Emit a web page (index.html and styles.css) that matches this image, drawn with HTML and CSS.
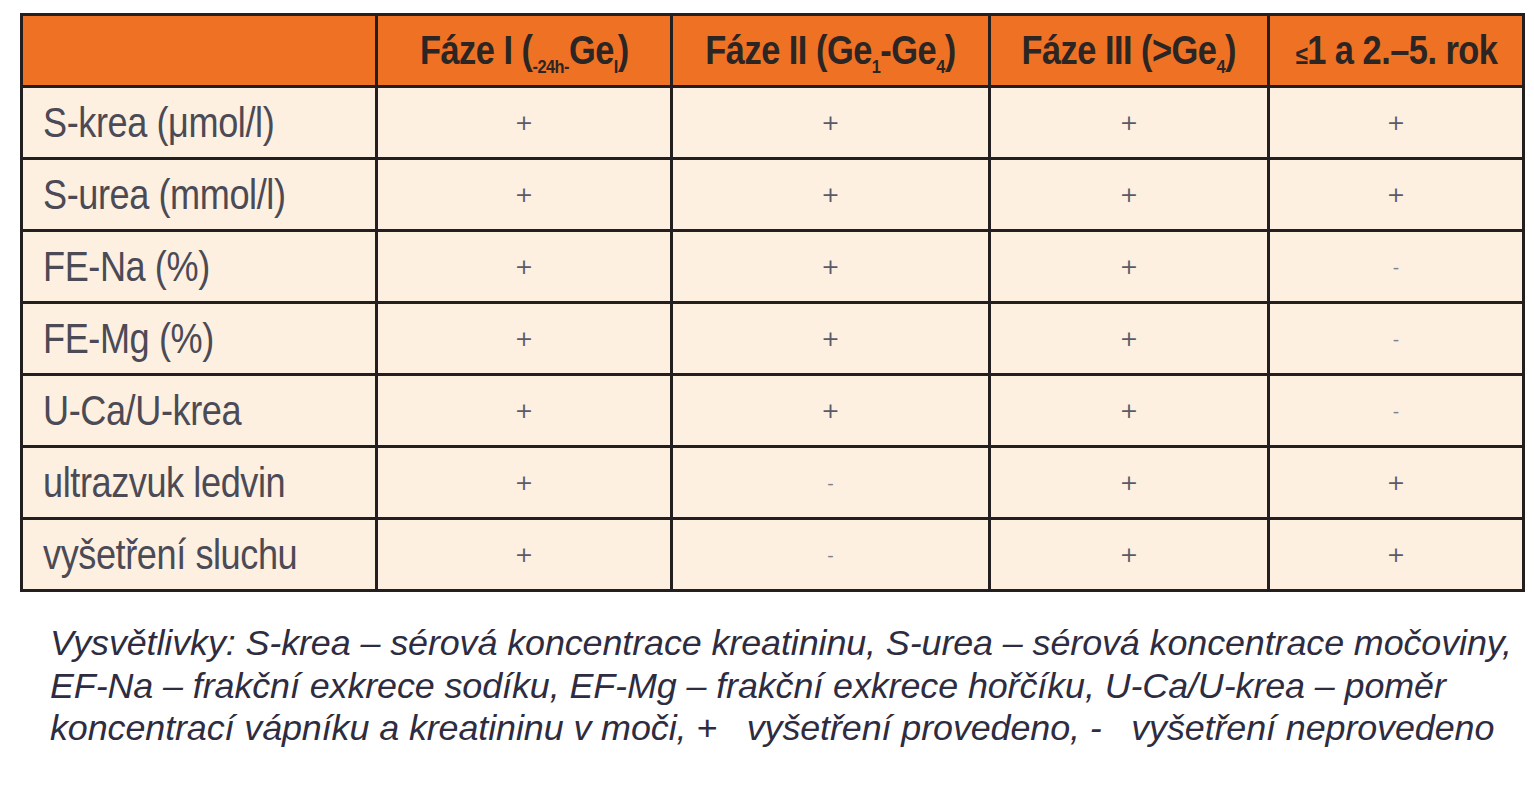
FILE: index.html
```html
<!DOCTYPE html>
<html lang="cs">
<head>
<meta charset="utf-8">
<title>Tabulka</title>
<link rel="stylesheet" href="styles.css">
</head>
<body>
<div class="page">
  <table class="grid">
    <colgroup>
      <col class="c0"><col class="c1"><col class="c2"><col class="c3"><col class="c4">
    </colgroup>
    <thead>
      <tr>
        <th></th>
        <th><span class="h">Fáze I (<sub>-24h-</sub>Ge<sub>I</sub>)</span></th>
        <th><span class="h">Fáze II (Ge<sub>1</sub>-Ge<sub>4</sub>)</span></th>
        <th><span class="h">Fáze III (&gt;Ge<sub>4</sub>)</span></th>
        <th><span class="h"><span class="le">≤</span>1 a 2.–5. rok</span></th>
      </tr>
    </thead>
    <tbody>
      <tr><td class="lab"><span class="t">S-krea (μmol/l)</span></td><td class="p">+</td><td class="p">+</td><td class="p">+</td><td class="p">+</td></tr>
      <tr><td class="lab"><span class="t">S-urea (mmol/l)</span></td><td class="p">+</td><td class="p">+</td><td class="p">+</td><td class="p">+</td></tr>
      <tr><td class="lab"><span class="t">FE-Na (%)</span></td><td class="p">+</td><td class="p">+</td><td class="p">+</td><td class="m">-</td></tr>
      <tr><td class="lab"><span class="t">FE-Mg (%)</span></td><td class="p">+</td><td class="p">+</td><td class="p">+</td><td class="m">-</td></tr>
      <tr><td class="lab"><span class="t">U-Ca/U-krea</span></td><td class="p">+</td><td class="p">+</td><td class="p">+</td><td class="m">-</td></tr>
      <tr><td class="lab"><span class="t">ultrazvuk ledvin</span></td><td class="p">+</td><td class="m">-</td><td class="p">+</td><td class="p">+</td></tr>
      <tr><td class="lab"><span class="t">vyšetření sluchu</span></td><td class="p">+</td><td class="m">-</td><td class="p">+</td><td class="p">+</td></tr>
    </tbody>
  </table>
  <p class="note">Vysvětlivky: S-krea – sérová koncentrace kreatininu, S-urea – sérová koncentrace močoviny,<br>EF-Na – frakční exkrece sodíku, EF-Mg – frakční exkrece hořčíku, U-Ca/U-krea – poměr<br>koncentrací vápníku a kreatininu v moči, +&nbsp;&nbsp;&nbsp;vyšetření provedeno, -&nbsp;&nbsp;&nbsp;vyšetření neprovedeno</p>
</div>
</body>
</html>
```
FILE: styles.css
```css
html, body {
  margin: 0;
  padding: 0;
  background: #ffffff;
}
.page {
  padding: 13px 0 0 20px;
  font-family: "Liberation Sans", "DejaVu Sans", sans-serif;
}
.grid {
  border-collapse: collapse;
  width: 1502px;
  table-layout: fixed;
}
.c0 { width: 355px; }
.c1 { width: 295px; }
.c2 { width: 318px; }
.c3 { width: 279px; }
.c4 { width: 255px; }
.grid th, .grid td {
  border: 3px solid #231f20;
  height: 69px;
  padding: 0;
  white-space: nowrap;
}
.grid th {
  background: #ef7124;
  color: #2b2523;
  font-weight: bold;
  font-size: 40px;
  text-align: center;
  letter-spacing: -0.6px;
}
.h {
  display: inline-block;
  transform: scaleX(0.86);
  transform-origin: center center;
}
.grid th sub {
  font-size: 19px;
  vertical-align: -9px;
  line-height: 0;
}
.grid th .le {
  font-size: 26px;
}
.grid td {
  background: #fdf0e1;
}
.grid td.lab {
  color: #4b4a55;
  font-size: 43px;
  padding-left: 20px;
  letter-spacing: -0.5px;
}
.t {
  display: inline-block;
  transform: scaleX(0.84);
  transform-origin: left center;
}
.grid td.p, .grid td.m {
  text-align: center;
  color: #5a5a68;
  font-size: 22px;
  font-family: "DejaVu Sans", sans-serif;
}
.grid td.m {
  color: #808090;
  font-size: 18px;
}
.note {
  margin: 30px 0 0 30px;
  font-style: italic;
  font-size: 35.9px;
  line-height: 42.5px;
  color: #2e2c40;
  letter-spacing: -0.1px;
}
```
